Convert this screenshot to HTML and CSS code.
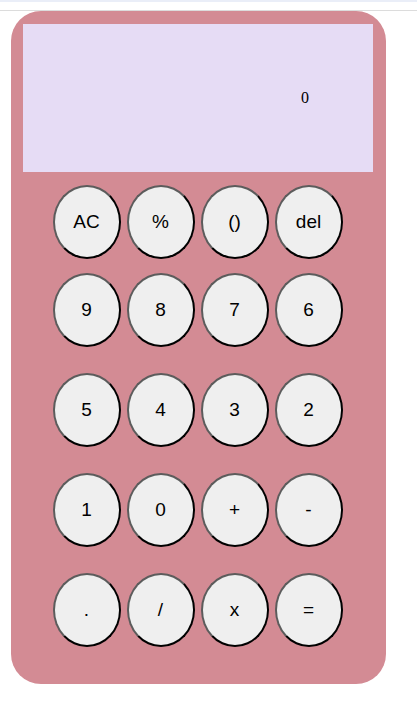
FILE: index.html
```html
<!DOCTYPE html>
<html>
<head>
<meta charset="utf-8">
<link rel="stylesheet" href="styles.css">
</head>
<body>
<div class="topbar"></div>
<div class="calc">
  <div class="display"><span class="value">0</span></div>
  <div class="keys first">
    <button class="key">AC</button>
    <button class="key">%</button>
    <button class="key">()</button>
    <button class="key">del</button>
  </div>
  <div class="keys second">
    <button class="key">9</button>
    <button class="key">8</button>
    <button class="key">7</button>
    <button class="key">6</button>
  </div>
  <div class="keys">
    <button class="key">5</button>
    <button class="key">4</button>
    <button class="key">3</button>
    <button class="key">2</button>
  </div>
  <div class="keys">
    <button class="key">1</button>
    <button class="key">0</button>
    <button class="key">+</button>
    <button class="key">-</button>
  </div>
  <div class="keys">
    <button class="key">.</button>
    <button class="key">/</button>
    <button class="key">x</button>
    <button class="key">=</button>
  </div>
</div>
</body>
</html>
```
FILE: styles.css
```css
html, body {
  margin: 0;
  padding: 0;
  background: #ffffff;
}
.topbar {
  height: 8px;
  border-top: 2px solid #eaeef8;
  border-bottom: 1px solid #dcdcdc;
}
.calc {
  margin-left: 11px;
  width: 375px;
  height: 673px;
  box-sizing: border-box;
  background: #d38b94;
  border-radius: 30px;
  padding: 13px 13px 0 12px;
}
.display {
  width: 350px;
  height: 148px;
  background: #e6dcf5;
  display: flex;
  align-items: center;
  justify-content: flex-end;
  padding-right: 64px;
  box-sizing: border-box;
  font-family: "Liberation Serif", serif;
  font-size: 16px;
  color: #000;
}
.keys {
  display: flex;
  justify-content: center;
  gap: 6px;
  margin-top: 26px;
  padding-right: 1px;
}
.keys.first {
  margin-top: 13px;
}
.keys.second {
  margin-top: 14px;
}
.key {
  width: 68px;
  height: 74px;
  box-sizing: border-box;
  border-radius: 50%;
  border: 2px solid;
  border-color: #5c5c5c #000 #000 #5c5c5c;
  background: #efefef;
  font-family: "Liberation Sans", Arial, sans-serif;
  font-size: 19px;
  color: #000;
  padding: 0;
}
```
